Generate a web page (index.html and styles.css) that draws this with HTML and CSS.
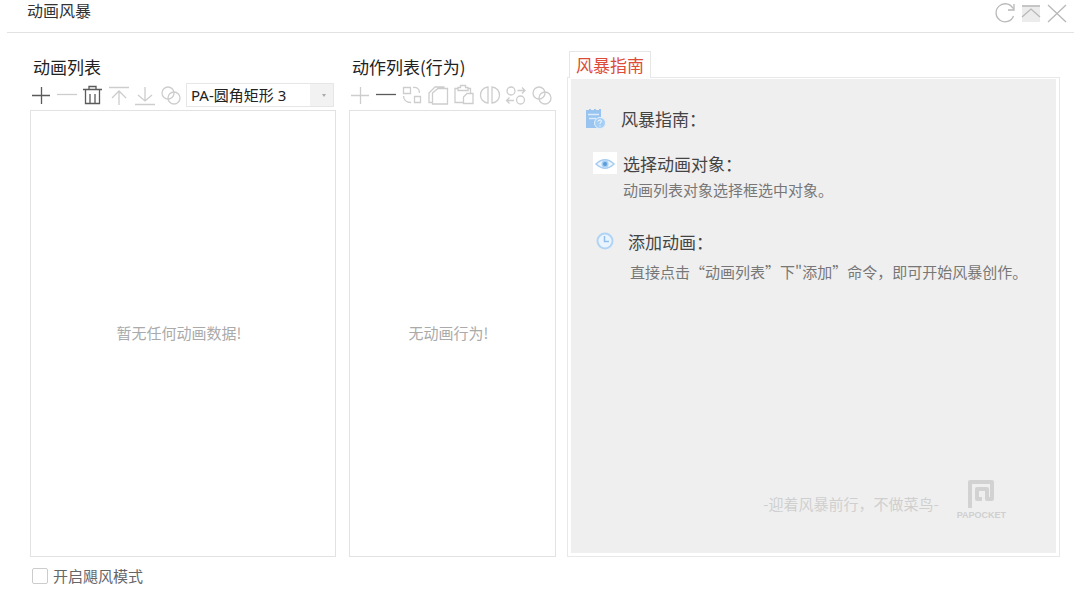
FILE: index.html
```html
<!DOCTYPE html>
<html lang="zh-CN">
<head>
<meta charset="utf-8">
<title>动画风暴</title>
<link rel="stylesheet" href="styles.css">
</head>
<body>
<svg class="sprite" aria-hidden="true">
  <symbol id="plus" viewBox="0 0 22 22"><path d="M2 11.5H20M11.5 3V20"/></symbol>
  <symbol id="minus" viewBox="0 0 22 22"><path d="M1 10.5H21"/></symbol>
  <symbol id="rings" viewBox="0 0 22 22"><circle cx="8" cy="9" r="6"/><circle cx="14" cy="14" r="6"/></symbol>
</svg>
<header class="titlebar">
  <h1 class="title">动画风暴</h1>
  <div class="window-actions">
    <button class="icon-btn" type="button" aria-label="刷新"><svg viewBox="0 0 22 22"><path d="M19 6.500A9 9 0 1 0 19.500 14M20 2V8H14"/></svg></button>
    <button class="icon-btn" type="button" aria-label="收起"><svg viewBox="0 0 22 22"><path class="shade" d="M2 3H20V20H2Z"/><path d="M2 4H20M2 15L11 7L20 15"/></svg></button>
    <button class="icon-btn" type="button" aria-label="关闭"><svg viewBox="0 0 22 22"><path d="M2 3L20 20M20 3L2 20"/></svg></button>
  </div>
</header>
<main class="workspace">
  <section class="column animations">
    <h2 class="heading">动画列表</h2>
    <div class="toolbar">
      <button class="icon-btn active" type="button" aria-label="添加"><svg><use href="#plus"/></svg></button>
      <button class="icon-btn" type="button" aria-label="删除"><svg><use href="#minus"/></svg></button>
      <button class="icon-btn active" type="button" aria-label="清空"><svg viewBox="0 0 22 22"><path d="M1 5.500H20M7 5V2.500H14V5M3.500 6V19.500H17.500V6M8 10V19M13 10V19"/></svg></button>
      <button class="icon-btn" type="button" aria-label="置顶"><svg viewBox="0 0 22 22"><path d="M1 3.500H21M11 21V7M4 14L11 7L18 14"/></svg></button>
      <button class="icon-btn" type="button" aria-label="置底"><svg viewBox="0 0 22 22"><path d="M1 20.500H21M11 3V17M4 11L11 17L18 11"/></svg></button>
      <button class="icon-btn" type="button" aria-label="合并"><svg><use href="#rings"/></svg></button>
      <div class="picker">
        <select class="picker-select" aria-label="动画对象"><option>PA-圆角矩形 3</option></select>
      </div>
    </div>
    <div class="list">暂无任何动画数据!</div>
  </section>
  <section class="column behaviors">
    <h2 class="heading">动作列表(行为)</h2>
    <div class="toolbar">
      <button class="icon-btn" type="button" aria-label="添加行为"><svg><use href="#plus"/></svg></button>
      <button class="icon-btn active" type="button" aria-label="删除行为"><svg><use href="#minus"/></svg></button>
      <button class="icon-btn" type="button" aria-label="替换"><svg viewBox="0 0 22 22"><path d="M2.500 3.500H9.500V9.500H2.500ZM13.500 12.500H19.500V18.500H13.500ZM12 3.500Q18.500 3 18.500 9M2.500 12Q3 18.500 10 18.500"/></svg></button>
      <button class="icon-btn" type="button" aria-label="复制"><svg viewBox="0 0 22 22"><path d="M5.500 9L11 4.500H20.500V20H5.500ZM5 18.500H2V9L8 3H17.500"/></svg></button>
      <button class="icon-btn" type="button" aria-label="粘贴"><svg viewBox="0 0 22 22"><path d="M10 18.500H2V4.500H5M15 4.500H17.500V9M5 3.500H7.500V1.500H12.500V3.500H15V6.500H5ZM10.500 19.500V13L14 9.500H20V19.500Z"/></svg></button>
      <button class="icon-btn" type="button" aria-label="镜像"><svg viewBox="0 0 22 22"><path d="M9 3C-1 4 -1 18 9 19ZM13 3C23 4 23 18 13 19Z"/></svg></button>
      <button class="icon-btn" type="button" aria-label="交换"><svg viewBox="0 0 22 22"><circle cx="6" cy="7" r="4"/><circle cx="15.500" cy="16" r="4"/><path d="M12.500 6.500H20M17 3.500L20 6.500L17 9.500M9 16.500H1.500M4.500 13.500L1.500 16.500L4.500 19.500"/></svg></button>
      <button class="icon-btn" type="button" aria-label="合并行为"><svg><use href="#rings"/></svg></button>
    </div>
    <div class="list">无动画行为!</div>
  </section>
  <section class="column guide">
    <button class="tab" type="button">风暴指南</button>
    <div class="panel">
      <div class="sheet">
        <div class="row intro">
          <svg class="row-icon" viewBox="0 0 22 22"><path fill="#98c4ef" d="M1 3H4V2H6V3H9V2H11V3H14V2H16V21H1Z"/><path stroke="#dcecfb" stroke-width="1.500" d="M3 7.500H14M4 11.500H11"/><circle cx="15" cy="16" r="5.500" fill="#a5cef5" stroke="#e5f1fc"/><path fill="none" stroke="#fff" d="M13 14.500Q13.500 12.500 15.500 13T15 16.500V17M15 18.500V19.500"/></svg>
          <h3 class="row-title">风暴指南：</h3>
        </div>
        <div class="row choose">
          <svg class="row-icon boxed" viewBox="0 0 22 22"><path fill="#edf6fe" stroke="#a6ccf0" stroke-width="1.500" d="M2 12Q11 3.500 20 12Q11 20.500 2 12Z"/><circle cx="11" cy="12" r="3.500" fill="#a3cdf5"/><circle cx="11" cy="12" r="2" fill="#5a9bd8"/></svg>
          <div>
            <h3 class="row-title">选择动画对象：</h3>
            <p class="row-text">动画列表对象选择框选中对象。</p>
          </div>
        </div>
        <div class="row add">
          <svg class="row-icon" viewBox="0 0 22 22"><circle cx="11" cy="11" r="7.500" fill="#eaf4fe" stroke="#b2d4f4" stroke-width="2"/><path fill="none" stroke="#90bfec" stroke-width="1.500" d="M10.500 6V11.500H15"/></svg>
          <div>
            <h3 class="row-title">添加动画：</h3>
            <p class="row-text">直接点击“动画列表”下"添加”命令，即可开始风暴创作。</p>
          </div>
        </div>
        <footer class="brand">
          <span class="motto">-迎着风暴前行，不做菜鸟-</span>
          <div class="logo">
            <svg class="logo-mark" viewBox="0 0 28 30"><path fill="none" stroke="#d2d2d2" stroke-width="4" stroke-linejoin="round" d="M3 29V3H25V20H20V10H10V20H15"/></svg>
            <span class="logo-name">PAPOCKET</span>
          </div>
        </footer>
      </div>
    </div>
  </section>
</main>
<label class="mode"><input class="mode-box" type="checkbox">开启飓风模式</label>
</body>
</html>
```
FILE: styles.css
```css
* {
  box-sizing: border-box;
}

body {
  margin: 0;
  min-height: 100vh;
  display: flex;
  flex-direction: column;
  background: #fff;
  color: #333;
  font-family: "Noto Sans CJK SC", sans-serif;
  font-size: 15px;
}

h1, h2, h3, p {
  margin: 0;
  font-weight: 400;
}

button {
  font: inherit;
}

.sprite {
  display: none;
}

.titlebar {
  display: flex;
  justify-content: space-between;
  margin: 0 6px 0 7px;
  padding: 0 6px 8px 20px;
  border-bottom: 1px solid #e2e2e2;
}

.title {
  font-size: 16px;
  line-height: 20px;
}

.window-actions {
  display: flex;
  gap: 4px;
  padding-top: 2px;
  color: #b8b8b8;
}

.icon-btn {
  flex: none;
  width: 22px;
  height: 22px;
  padding: 0;
  border: 0;
  background: none;
  color: inherit;
}

.icon-btn svg {
  display: block;
  width: 22px;
  height: 22px;
  fill: none;
  stroke: currentColor;
  stroke-width: 1.3;
}

.icon-btn.active {
  color: #5a5a5a;
}

.icon-btn .shade {
  fill: #ececec;
  stroke: none;
}

.workspace {
  flex: 1;
  display: flex;
  padding: 18px 20px 0 30px;
}

.column {
  display: flex;
  flex-direction: column;
  min-width: 0;
}

.animations {
  flex: 306 1 0;
}

.behaviors {
  flex: 207 1 0;
  margin-left: 13px;
}

.guide {
  flex: 493 1 0;
  margin-left: 11px;
}

.heading {
  padding-left: 3px;
  font-size: 17px;
  line-height: 32px;
  color: #222;
}

.toolbar {
  display: flex;
  align-items: center;
  gap: 4px;
  height: 24px;
  margin-bottom: 3px;
  color: #cdcdcd;
}

.picker {
  position: relative;
  flex: 1;
  height: 24px;
  margin-right: 2px;
}

.picker::after {
  content: "";
  position: absolute;
  top: 11px;
  right: 8px;
  border: 2px solid transparent;
  border-top: 3px solid #aaa;
  pointer-events: none;
}

.picker-select {
  appearance: none;
  width: 100%;
  height: 24px;
  padding: 0 4px;
  border: 1px solid #e6e6e6;
  border-radius: 0;
  background: linear-gradient(to left, #f2f2f2 23px, #fff 23px);
  color: #222;
  font-family: "Noto Sans", "Noto Sans CJK SC", sans-serif;
  font-size: 15px;
}

.list {
  flex: 1;
  display: flex;
  align-items: center;
  justify-content: center;
  padding: 0 8px 2px 0;
  border: 1px solid #e2e2e2;
  color: #aaa;
}

.tab {
  position: relative;
  align-self: flex-start;
  height: 27px;
  margin: 0 0 -1px 2px;
  padding: 0 6px;
  border: 1px solid #e6e6e6;
  border-bottom: 0;
  background: #fff;
  color: #dd4b39;
  font-size: 17px;
  line-height: 26px;
}

.panel {
  flex: 1;
  display: flex;
  padding: 1px 3px 3px;
  border: 1px solid #e8e8e8;
}

.sheet {
  flex: 1;
  display: flex;
  flex-direction: column;
  padding: 28px 14px 32px;
  background: #efefef;
}

.row {
  display: flex;
}

.row-icon {
  flex: none;
  width: 22px;
  height: 22px;
}

.boxed {
  width: 24px;
  background: #fff;
}

.row-title {
  font-size: 17px;
  line-height: 24px;
  color: #444;
}

.row-text {
  line-height: 27px;
  color: #777;
}

.intro {
  gap: 14px;
}

.choose {
  gap: 6px;
  margin-top: 21px;
  padding-left: 8px;
}

.add {
  gap: 12px;
  margin-top: 27px;
  padding-left: 9px;
}

.add .row-text {
  padding: 4px 0 0 2px;
}

.brand {
  display: flex;
  align-items: center;
  justify-content: flex-end;
  gap: 18px;
  margin-top: auto;
  padding-right: 36px;
  color: #cfcfcf;
}

.motto {
  padding-top: 6px;
}

.logo {
  display: flex;
  flex-direction: column;
  align-items: center;
}

.logo-mark {
  width: 28px;
  height: 30px;
}

.logo-name {
  font: bold 9px/12px "Liberation Sans", sans-serif;
}

.mode {
  display: flex;
  align-items: center;
  align-self: flex-start;
  gap: 5px;
  margin: 8px 0 11px 32px;
  line-height: 22px;
  color: #666;
}

.mode-box {
  appearance: none;
  width: 16px;
  height: 16px;
  margin: 0;
  border: 1px solid #ccc;
  border-radius: 2px;
  background: #fff;
}

.mode-box:checked {
  background: #98c4ef;
}
```
